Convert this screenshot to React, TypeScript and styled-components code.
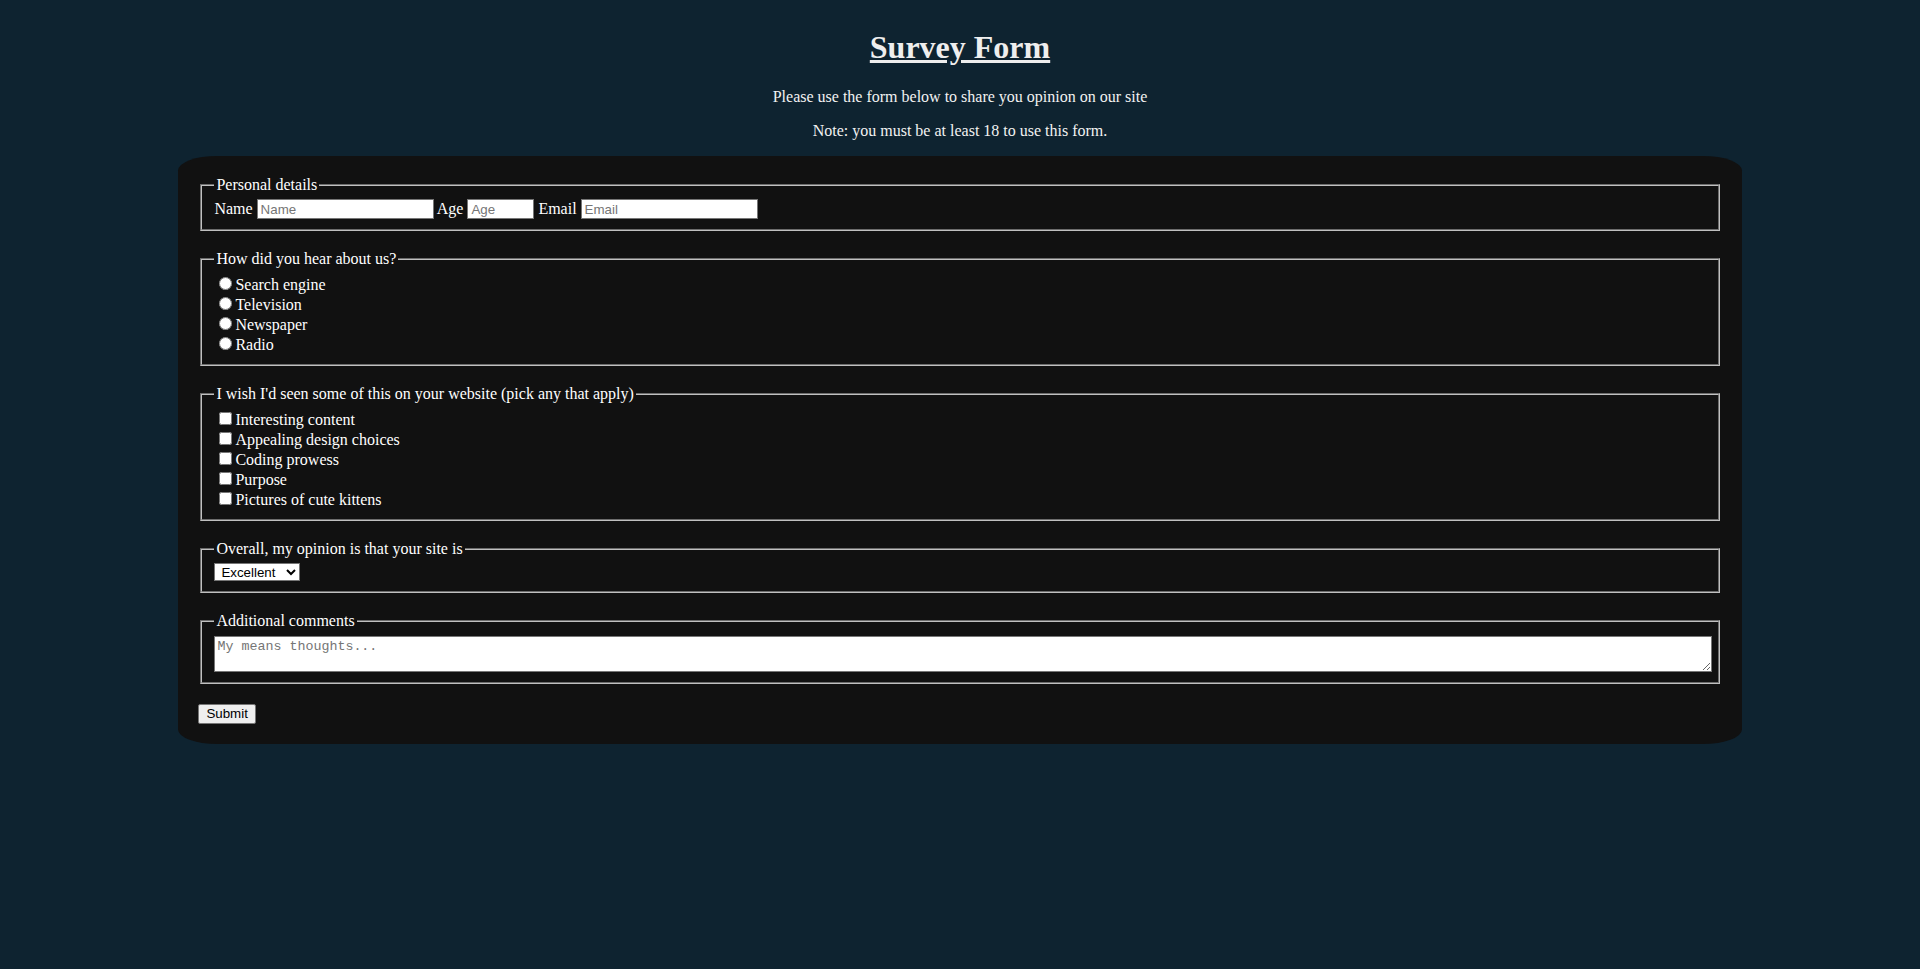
import React from "react";
import styled, { createGlobalStyle } from "styled-components";

const GlobalStyle = createGlobalStyle`
  body {
    margin: 8px;
    background: #0e2330;
    color: #ffffff;
    font-family: "Liberation Serif", "Times New Roman", serif;
    font-size: 16px;
  }
`;

const Title = styled.h1`
  margin: 0.67em 0;
  font-size: 32px;
  font-weight: bold;
  text-align: center;
  text-decoration: underline;
  color: #eeeeee;
`;

const Intro = styled.p`
  margin: 16px 0;
  text-align: center;
  color: #f2f2f2;
`;

const Form = styled.form`
  width: 80%;
  margin: 0 auto;
  padding: 20px;
  background: #111111;
  border-radius: 2.5%;
`;

const Fieldset = styled.fieldset`
  margin: 0 2px 19px;
  padding: 0.35em 0.75em 0.625em;
  border: 2px groove rgb(192, 192, 192);
`;

const Legend = styled.legend`
  padding: 0 2px;
`;

const Label = styled.label`
  color: #ffffff;
`;

const TextInput = styled.input<{ $width: number }>`
  box-sizing: content-box;
  width: ${(p) => p.$width}px;
  height: 14px;
  font-family: "Liberation Sans", Arial, sans-serif;
  font-size: 13.333px;
  padding: 2px 3px;
  border: 1px solid #767676;
  border-radius: 0;
  background: #ffffff;
  color: #000;
  &::placeholder {
    color: #757575;
  }
`;

const OptionRow = styled.div`
  line-height: normal;
`;

const Choice = styled.input`
  margin: 3px 3px 0 5px;
`;

const Select = styled.select`
  width: 86px;
  height: 18px;
  font-family: "Liberation Sans", Arial, sans-serif;
  font-size: 13.333px;
  color: #000;
  background: #fff;
  border: 1px solid #767676;
  border-radius: 0;
  padding: 0 0 0 2px;
`;

const Comments = styled.textarea`
  width: 100%;
  height: 30px;
  display: block;
  font-family: "Liberation Mono", "DejaVu Sans Mono", monospace;
  font-size: 13.333px;
  padding: 2px;
  border: 1px solid #767676;
  box-sizing: content-box;
  &::placeholder {
    color: #757575;
  }
`;

const SubmitButton = styled.button`
  margin-top: 1px;
  font-family: "Liberation Sans", Arial, sans-serif;
  font-size: 13.333px;
  line-height: 16px;
  padding: 1px 7px;
  color: #000;
  background: #efefef;
  border: 1px solid #767676;
  border-radius: 2px;
`;

const sources = ["Search engine", "Television", "Newspaper", "Radio"];
const wishes = [
  "Interesting content",
  "Appealing design choices",
  "Coding prowess",
  "Purpose",
  "Pictures of cute kittens",
];

export default function App() {
  return (
    <>
      <GlobalStyle />
      <Title>Survey Form</Title>
      <Intro>Please use the form below to share you opinion on our site</Intro>
      <Intro>Note: you must be at least 18 to use this form.</Intro>
      <Form onSubmit={(e) => e.preventDefault()}>
        <Fieldset>
          <Legend>Personal details</Legend>
          <Label htmlFor="name">Name</Label>{" "}
          <TextInput id="name" type="text" placeholder="Name" $width={169} />{" "}
          <Label htmlFor="age">Age</Label>{" "}
          <TextInput id="age" type="text" placeholder="Age" $width={59} />{" "}
          <Label htmlFor="email">Email</Label>{" "}
          <TextInput id="email" type="email" placeholder="Email" $width={169} />
        </Fieldset>
        <Fieldset>
          <Legend>How did you hear about us?</Legend>
          {sources.map((s) => (
            <OptionRow key={s}>
              <Label>
                <Choice type="radio" name="source" value={s} />
                {s}
              </Label>
            </OptionRow>
          ))}
        </Fieldset>
        <Fieldset>
          <Legend>I wish I'd seen some of this on your website (pick any that apply)</Legend>
          {wishes.map((w) => (
            <OptionRow key={w}>
              <Label>
                <Choice type="checkbox" value={w} />
                {w}
              </Label>
            </OptionRow>
          ))}
        </Fieldset>
        <Fieldset>
          <Legend>Overall, my opinion is that your site is</Legend>
          <Select defaultValue="Excellent">
            <option>Excellent</option>
            <option>Good</option>
            <option>Average</option>
            <option>Poor</option>
          </Select>
        </Fieldset>
        <Fieldset>
          <Legend>Additional comments</Legend>
          <Comments placeholder="My means thoughts..." />
        </Fieldset>
        <SubmitButton type="submit">Submit</SubmitButton>
      </Form>
    </>
  );
}
